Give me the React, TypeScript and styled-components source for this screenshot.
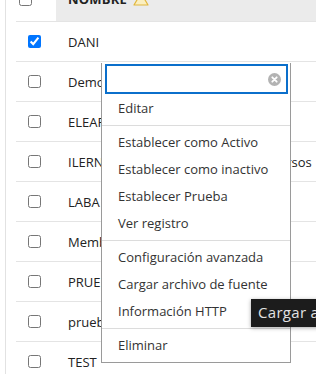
import React from 'react';
import styled, { createGlobalStyle } from 'styled-components';

const GlobalStyle = createGlobalStyle`
  html, body {
    margin: 0;
    padding: 0;
    background: #fff;
  }
  body {
    font-family: 'Open Sans', 'Liberation Sans', sans-serif;
    font-size: 13px;
    color: #222;
  }
`;

const Page = styled.div`
  position: relative;
  width: 316px;
  height: 374px;
  overflow: hidden;
`;

const Frame = styled.div`
  margin-left: 5px;
  padding-left: 10px;
  border-left: 1px solid #e2e2e2;
  min-height: 400px;
`;

const HeaderRow = styled.div`
  display: grid;
  grid-template-columns: 40px 1fr;
  height: 41px;
  margin-top: -19px;
  box-sizing: border-box;
  border-bottom: 1px solid #e4e4e4;
`;

const HeaderCheckCell = styled.div`
  display: flex;
  align-items: flex-end;
  padding: 0 0 15px 3px;
`;

const HeaderName = styled.div`
  display: flex;
  align-items: flex-end;
  gap: 6px;
  background: #ebebeb;
  padding: 0 0 15px 12px;
  font-weight: 700;
  font-size: 13px;
  line-height: 13px;
  letter-spacing: 0.2px;
  color: #222;
`;

const Row = styled.div`
  display: grid;
  grid-template-columns: 40px 1fr;
  align-items: center;
  height: 40px;
  box-sizing: border-box;
  border-bottom: 1px solid #e4e4e4;
`;

const CheckCell = styled.div`
  display: flex;
  align-items: center;
  padding-left: 12px;
`;

const Check = styled.input.attrs({ type: 'checkbox' })`
  width: 13px;
  height: 13px;
  margin: 0;
  accent-color: #0075ff;
`;

const NameCell = styled.div`
  padding-left: 12px;
  white-space: nowrap;
  color: #222;
`;

const Menu = styled.div`
  position: absolute;
  left: 101px;
  top: 63px;
  width: 190px;
  height: 300px;
  box-sizing: border-box;
  background: #fff;
  border: 1px solid #9a9a9a;
  border-top: none;
  padding: 1px 2px 0 3px;
  display: flex;
  flex-direction: column;
`;

const SearchBox = styled.div`
  position: relative;
  height: 30px;
  box-sizing: border-box;
  border: 2px solid #0b6fcb;
  flex-shrink: 0;
`;

const ClearIcon = styled.svg`
  position: absolute;
  right: 5px;
  top: 7px;
`;

const MenuList = styled.div`
  display: flex;
  flex-direction: column;
  margin: 0 -2px 0 -3px;
  padding-top: 1px;
`;

const Item = styled.div`
  height: 27px;
  line-height: 27px;
  padding-left: 16px;
  color: #333;
  white-space: nowrap;
`;

const Divider = styled.div`
  height: 1px;
  background: #dcdcdc;
  margin: 3px 0 3px;
`;

const Tooltip = styled.div`
  position: absolute;
  left: 251px;
  top: 299px;
  height: 28px;
  line-height: 27px;
  padding: 0 7px;
  background: #1c1c1c;
  color: #e2e2e2;
  font-size: 15px;
  letter-spacing: 0.3px;
  white-space: nowrap;
  box-shadow: 0 1px 4px rgba(0, 0, 0, 0.35);
`;

const rows = [
  { name: 'DANI', checked: true },
  { name: 'Demo' },
  { name: 'ELEARNING' },
  { name: 'ILERNA Online Formación y los Recursos' },
  { name: 'LABA' },
  { name: 'Membership' },
  { name: 'PRUEBA' },
  { name: 'prueba' },
  { name: 'TEST' },
];

const Warn = () => (
  <svg width="16" height="14" viewBox="0 0 16 14">
    <path d="M8 1 L15 13 L1 13 Z" fill="#fbefc0" stroke="#e2b73c" strokeWidth="1.2" strokeLinejoin="round" />
  </svg>
);

export default function App() {
  return (
    <Page>
      <GlobalStyle />
      <Frame>
        <HeaderRow>
          <HeaderCheckCell>
            <Check />
          </HeaderCheckCell>
          <HeaderName>
            NOMBRE <Warn />
          </HeaderName>
        </HeaderRow>
        {rows.map((r) => (
          <Row key={r.name}>
            <CheckCell>
              <Check defaultChecked={!!r.checked} />
            </CheckCell>
            <NameCell>{r.name}</NameCell>
          </Row>
        ))}
      </Frame>

      <Menu>
        <SearchBox>
          <ClearIcon width="13" height="13" viewBox="0 0 13 13">
            <circle cx="6.5" cy="6.5" r="6.5" fill="#b3b3b3" />
            <path d="M4.3 4.3 L8.7 8.7 M8.7 4.3 L4.3 8.7" stroke="#fff" strokeWidth="1.8" strokeLinecap="round" />
          </ClearIcon>
        </SearchBox>
        <MenuList>
          <Item>Editar</Item>
          <Divider />
          <Item>Establecer como Activo</Item>
          <Item>Establecer como inactivo</Item>
          <Item>Establecer Prueba</Item>
          <Item>Ver registro</Item>
          <Divider />
          <Item>Configuración avanzada</Item>
          <Item>Cargar archivo de fuente</Item>
          <Item>Información HTTP</Item>
          <Divider />
          <Item>Eliminar</Item>
        </MenuList>
      </Menu>

      <Tooltip>Cargar archivo de fuente</Tooltip>
    </Page>
  );
}
